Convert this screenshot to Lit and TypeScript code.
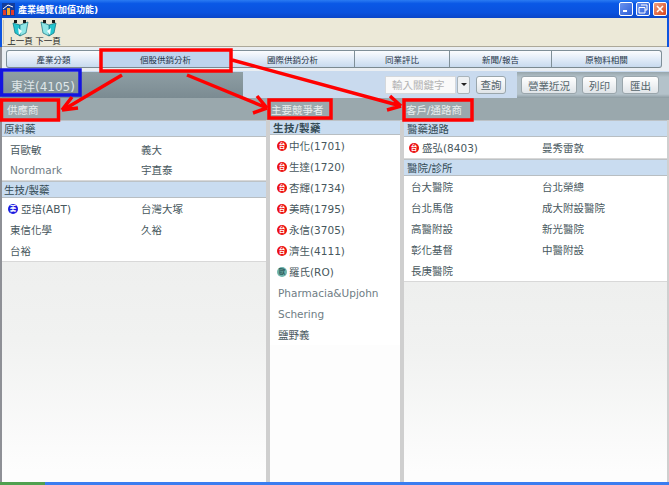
import { LitElement, html, css, svg } from "lit";
import { customElement } from "lit/decorators.js";

type Item = { t: string; b?: "tw" | "us" | "eu" };
type Group = { name: string; items: Item[] };

const col1: Group[] = [
  { name: "原料藥", items: [{ t: "百歐敏" }, { t: "義大" }, { t: "Nordmark" }, { t: "宇直泰" }] },
  { name: "生技/製藥", items: [{ t: "亞培(ABT)", b: "us" }, { t: "台灣大塚" }, { t: "東信化學" }, { t: "久裕" }, { t: "台裕" }] },
];
const col2: Group[] = [
  {
    name: "生技/製藥",
    items: [
      { t: "中化(1701)", b: "tw" }, { t: "生達(1720)", b: "tw" }, { t: "杏輝(1734)", b: "tw" },
      { t: "美時(1795)", b: "tw" }, { t: "永信(3705)", b: "tw" }, { t: "濟生(4111)", b: "tw" },
      { t: "羅氏(RO)", b: "eu" }, { t: "Pharmacia&Upjohn" }, { t: "Schering" }, { t: "鹽野義" },
    ],
  },
];
const col3: Group[] = [
  { name: "醫藥通路", items: [{ t: "盛弘(8403)", b: "tw" }, { t: "曼秀雷敦" }] },
  {
    name: "醫院/診所",
    items: [
      { t: "台大醫院" }, { t: "台北榮總" }, { t: "台北馬偕" }, { t: "成大附設醫院" }, { t: "高醫附設" },
      { t: "新光醫院" }, { t: "彰化基督" }, { t: "中醫附設" }, { t: "長庚醫院" },
    ],
  },
];
const tabs = ["產業分類", "個股供銷分析", "國際供銷分析", "同業評比", "新聞/報告", "原物料相關"];
const tabW = [95, 130, 124, 95, 102, 110];

@customElement("app-root")
export class AppRoot extends LitElement {
  static styles = css`
    :host { display: block; width: 669px; height: 485px; position: relative; overflow: hidden;
      font-family: "DejaVu Sans", "Noto Sans CJK TC", sans-serif; font-size: 10.5px; color: #47575d; background: #0d55e0; }
    .title { height: 18px; display: flex; align-items: center; padding: 0 2px; gap: 2px; color: #fff; font-size: 9px; font-weight: 700;
      background: linear-gradient(#2a7bf2 0, #0a58e6 20%, #0a52de 70%, #0a46c8 100%); }
    .title .grow { flex: 1; }
    .wb { width: 14px; height: 14px; border-radius: 2px; border: 1px solid #fff; box-sizing: border-box; margin-left: 1px;
      display: flex; align-items: center; justify-content: center; background: linear-gradient(135deg,#6a93ee,#2c5ed8); }
    .wb.close { background: linear-gradient(135deg,#f0a080,#d8441c); }
    .toolbar { height: 29px; box-sizing: border-box; background: #ece9d8; display: flex; align-items: flex-start; padding: 2px 0 0 1px; gap: 6px;
      border-bottom: 1px solid #aca899; font-size: 8.5px; color: #222; margin: 0 2px; }
    .grip { width: 1px; height: 24px; background: #c8c4b0; margin-right: -1px; }
    .tb { width: 22px; display: flex; flex-direction: column; align-items: center; line-height: 9px; white-space: nowrap; }
    .main { border-left: 2px solid #8e9096; height: 435px; background: #fdfdfd; display: flex; flex-direction: column; }
    .tabs { height: 24px; display: flex; align-items: flex-start; padding: 3px 0 0 4px; background: #eaeef2; box-sizing: border-box; }
    .tab { height: 18px; width: var(--w); box-sizing: border-box; border: 1px solid #7f8f98; border-left-width: 0; border-bottom-color: #7b8990; font-size: 8.5px; color: #1e3448;
      display: flex; align-items: center; justify-content: center; background: linear-gradient(#fbfcfe, #dce8f6 60%, #c8daee); }
    .tab:first-child { border-left-width: 1px; border-radius: 3px 0 0 3px; }
    .tab:last-child { border-radius: 0 3px 3px 0; }
    .tab.on { background: #bed4ee; }
    .bar { height: 27px; background: #c9daee; display: flex; align-items: stretch; }
    .stock { width: 241px; margin-top: 1px; color: #dfe6e8; font-size: 12px; display: flex; align-items: center; padding-left: 9px; box-sizing: border-box;
      background: linear-gradient(#8e9ea4, #7b8b92); }
    .ctl { flex: 1; display: flex; align-items: center; justify-content: flex-end; padding-right: 11px; gap: 6px; }
    .inp { width: 71px; height: 18px; background: #fafafa; border: 1px solid #d4d8dc; box-sizing: border-box; color: #b4b4b4; font-size: 10.5px; display: flex; align-items: center; padding-left: 6px; }
    .drop { width: 13px; height: 18px; border: 1px solid #a9b4ba; border-radius: 2px; background: #eef1f3; display: flex; align-items: center; justify-content: center; box-sizing: border-box; margin-left: -5px; }
    .drop i { border: 3px solid transparent; border-top: 3px solid #222; border-bottom: 0; }
    .btn { height: 18px; width: var(--w); justify-content: center; border: 1px solid #9aa6ac; border-radius: 3px; background: linear-gradient(#fff, #dfe4e8); color: #54646a; font-size: 10.5px; display: flex; align-items: center; box-sizing: border-box; }
    .ops { width: 152px; display: flex; align-items: center; gap: 5px; padding-left: 4px; margin-top: 1px; box-sizing: border-box; background: linear-gradient(#97a6ac, #b4c2ca 20%, #b4c2ca 85%, #8d9ca2); }
    .cols { flex: 1; display: grid; grid-template-columns: 264px 130px 263px; column-gap: 4px; background: #cfcfcf; padding-right: 2px; }
    .col { background: #fdfdfd; display: flex; flex-direction: column; min-width: 0; }
    .head { height: 22px; background: #9aa8ad; color: #e9eeee; font-size: 10.5px; display: flex; align-items: center; padding-left: 5px; flex: none; margin: 0 -2px; }
    .col1 .head { margin-left: 0; }
    .col2 .head { padding-left: 3px; }
    .col3 .head { margin-right: -3px; padding-left: 4px; }
    .gh { height: 15px; background: #c9dcf0; border-top: 1px solid #bcc2c6; border-bottom: 1px solid #b8bec2; font-size: 10.5px; color: #334a54; display: flex; align-items: center; padding-left: 2px; box-sizing: content-box; flex: none; }
    .grid { background: #fff; display: grid; grid-template-columns: 131px 1fr; grid-auto-rows: 21px; padding: 0 0 0 6px; flex: none; border-bottom: 1px solid #d8d8d8; }
    .col1 .g0 { grid-auto-rows: 20.5px; padding-top: 2px; }
    .grid.one { grid-template-columns: 1fr; border: 0; }
    .cell { display: flex; align-items: center; gap: 3px; white-space: nowrap; padding-left: 2px; }
    .cell.b { padding-left: 0; }
    .cell .lat { color: #6f7d84; }
    .badge { width: 10px; height: 10px; border-radius: 50%; color: #fff; font-size: 6.5px; line-height: 10px; text-align: center; flex: none; font-weight: 700; }
    .badge.tw { background: #ec1010; }
    .badge.us { background: #1818e0; }
    .badge.eu { background: #6fb5ad; color: #2d5a5a; }
    .rest { flex: 1; background: linear-gradient(#eeefee 0, #f1f2f1 35%, #fdfdfd 95%); }
    .col2 .rest { background: #fdfdfd; }
    .col2 .gh { font-weight: 700; letter-spacing: .4px; padding-left: 3px; height: 13px; }
    .col2 .grid { padding-left: 7px; border: 0; }
    .col2 .cell { gap: 2px; padding-left: 1px; }
    .col2 .cell.b { padding-left: 0; }
    .col3 .grid { padding-left: 5px; }
    .col3 .gh { padding-left: 3px; }
    .bottom { height: 3px; display: flex; background: #3a7df0; }
    .bottom .st { width: 45px; background: #4fa04f; }
    .ov { position: absolute; inset: 0; pointer-events: none; }
  `;

  private cell(it: Item) {
    const lat = /^[A-Za-z]/.test(it.t);
    const lab: Record<string, string> = { tw: "台", us: "美", eu: "歐" };
    return html`<div class="cell ${it.b ? "b" : ""}">
      ${it.b ? html`<span class="badge ${it.b}">${lab[it.b]}</span>` : ""}
      <span class="${lat ? "lat" : ""}">${it.t}</span>
    </div>`;
  }
  private column(cls: string, title: string, groups: Group[], one = false) {
    return html`<section class="col ${cls}">
      <div class="head">${title}</div>
      ${groups.map((g, i) => html`<div class="gh">${g.name}</div>
        <div class="grid g${i} ${one ? "one" : ""}">${g.items.map((it) => this.cell(it))}</div>`)}
      <div class="rest"></div>
    </section>`;
  }
  private pageIcon(flip: boolean) {
    return html`<svg width="17" height="17" viewBox="0 0 17 17">
      <g transform="${flip ? "translate(17 0) scale(-1 1)" : ""}">
        <path d="M1 3 L8 5 L8 16 L3 13 Z" fill="#22c4cf" stroke="#0f6f7c" stroke-width=".7"/>
        <path d="M8 5 L16 2 L14 13 L8 16 Z" fill="#8fe6e6" stroke="#0f6f7c" stroke-width=".7"/>
        <path d="M2 0 H5 V3 H2 Z M11 0 H14 V3 H11 Z" fill="#1c1c1c"/>
        <path d="M6 8 L10 11 L7 15 Z" fill="#f4ffff"/>
      </g></svg>`;
  }
  render() {
    return html`
      <div class="title">
        <svg width="13" height="13" viewBox="0 0 13 13" style="margin-right:1px">
          <rect width="13" height="13" fill="#123c9c"/><rect x="1" y="7" width="3" height="5" fill="#e23b2b"/>
          <rect x="5" y="5" width="3" height="7" fill="#f2a92a"/><rect x="9" y="7" width="3" height="5" fill="#e23b2b"/>
          <path d="M1 6 L6 2 L11 4" stroke="#fff" fill="none"/>
        </svg>
        <span>產業總覽(加值功能)</span>
        <span class="grow"></span>
        <span class="wb"><svg width="8" height="8"><rect x="1" y="5" width="4" height="2" fill="#fff"/></svg></span>
        <span class="wb"><svg width="10" height="10" viewBox="0 0 10 10"><path d="M3 1h6v5H7M1 3.5h6v5.5H1z" fill="none" stroke="#fff"/></svg></span>
        <span class="wb close"><svg width="10" height="10" viewBox="0 0 10 10"><path d="M2 2l6 6M8 2l-6 6" stroke="#fff" stroke-width="1.6"/></svg></span>
      </div>
      <div class="toolbar">
        <div class="grip"></div>
        <div class="tb">${this.pageIcon(false)}<span>上一頁</span></div>
        <div class="tb">${this.pageIcon(true)}<span>下一頁</span></div>
      </div>
      <div class="main">
        <div class="tabs">
          ${tabs.map((t, i) => html`<div class="tab ${i === 1 ? "on" : ""}" style="--w:${tabW[i]}px">${t}</div>`)}
        </div>
        <div class="bar">
          <div class="stock">東洋(4105)</div>
          <div class="ctl">
            <div class="inp">輸入關鍵字</div>
            <div class="drop"><i></i></div>
            <div class="btn" style="--w:30px">查詢</div>
          </div>
          <div class="ops">
            <div class="btn" style="--w:56px">營業近況</div>
            <div class="btn" style="--w:35px">列印</div>
            <div class="btn" style="--w:37px">匯出</div>
          </div>
        </div>
        <div class="cols">
          ${this.column("col1", "供應商", col1)}
          ${this.column("col2", "主要競爭者", col2, true)}
          ${this.column("col3", "客戶/通路商", col3)}
        </div>
      </div>
      <div class="bottom"><div class="st"></div></div>
      <svg class="ov" width="669" height="485" viewBox="0 0 669 485">
        ${svg`
        <g fill="none" stroke="#f00" stroke-width="3.5">
          <rect x="101" y="50" width="130" height="21"/>
          <rect x="1.5" y="100" width="57" height="20"/>
          <rect x="269" y="100" width="62" height="18"/>
          <rect x="404" y="100" width="68" height="20"/>
        </g>
        <rect x="1.5" y="70" width="78.5" height="25" fill="none" stroke="#1414e0" stroke-width="3.5"/>
        <g stroke="#f00" stroke-width="3.5" fill="none">
          <path d="M122 75 L63 110 M62 110 L78 108 M62 110 L72 97"/>
          <path d="M187 75 L267 108 M267 108 L253 113 M267 108 L257 96"/>
          <path d="M232 60 L401 106 M401 106 L387 110 M401 106 L390 96"/>
        </g>`}
      </svg>
    `;
  }
}
